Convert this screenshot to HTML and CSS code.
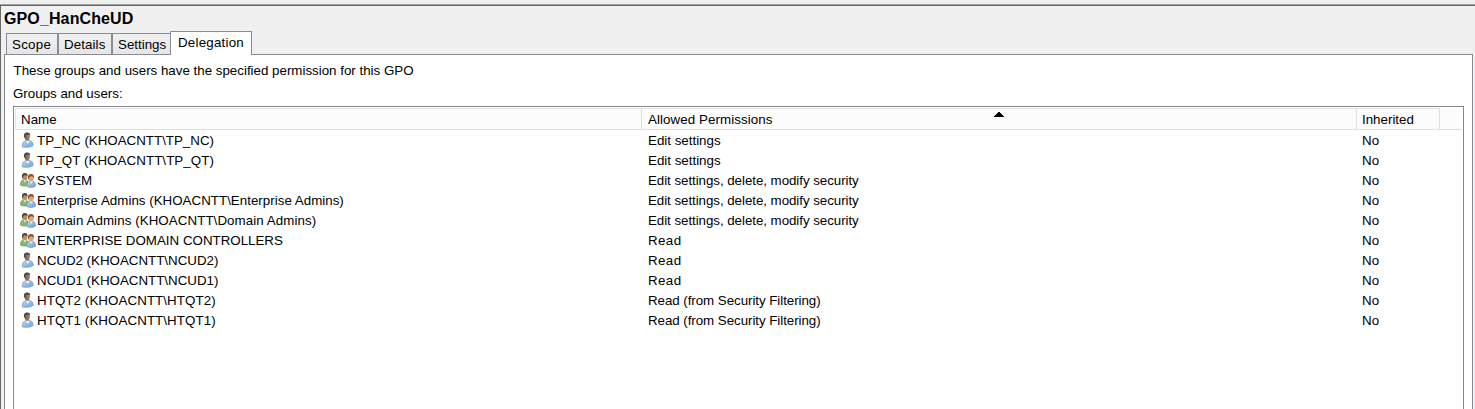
FILE: index.html
```html
<!DOCTYPE html>
<html lang="en">
<head>
<meta charset="utf-8">
<title>GPO_HanCheUD</title>
<link rel="stylesheet" href="styles.css">
</head>
<body>
<svg class="defs" width="0" height="0">
  <defs>
    <linearGradient id="blue" x1="0" y1="0" x2="1" y2="1"><stop offset="0" stop-color="#b9d6f2"/><stop offset="1" stop-color="#6fa3d6"/></linearGradient>
    <linearGradient id="skin" x1="0" y1="0" x2="1" y2="0"><stop offset="0" stop-color="#6a5446"/><stop offset="1" stop-color="#b48a6a"/></linearGradient>
    <symbol id="user" viewBox="0 0 16 16">
      <path d="M2.3 15C1.9 12.5 2.6 9.8 5.2 8.8L9.5 8.3C12.3 8.8 13.3 11 13.2 13.6C11.5 15.3 5.5 15.8 2.3 15Z" fill="url(#blue)" stroke="#6c95c0" stroke-width=".6"/>
      <path d="M5.2 8.8L8.2 12L9.4 8.3Z" fill="#eef5fb"/>
      <path d="M4.2 4C4 1.8 5.3.7 7 .7C9.2.7 10.2 2 10 4.4C9.8 7 8.7 8.9 7.4 8.9C5.7 8.9 4.4 6.6 4.2 4Z" fill="url(#skin)"/>
      <path d="M4 5C3.5 2 4.6.4 7 .4C9.2.4 10.4 1.6 10.1 3C8.6 2.2 6.6 2.4 5.6 3L5.2 5.8Z" fill="#4b4b48"/>
    </symbol>
    <symbol id="group" viewBox="0 0 16 16">
      <path d="M.6 13.2C.4 10 1.2 8.3 3.2 7.9L6.2 7.9C8 8.8 8.3 11 8 13.6C5.5 14.2 2.6 14.2.6 13.2Z" fill="#86b971" stroke="#558348" stroke-width=".6"/>
      <path d="M3.3 8L5 10.5L6.2 8Z" fill="#eff5dc"/>
      <ellipse cx="4.8" cy="4.8" rx="2.6" ry="3.5" fill="#b98f68"/>
      <path d="M2 5.3C1.7 2.3 3 1 5 1.1C7 1.1 7.9 2.4 7.5 4.2C5.8 2.9 4.2 3.1 3.4 4L3 6.5Z" fill="#57452f"/>
      <path d="M7 14.5C6.5 11.5 7.6 9.6 9.5 9.2L12.6 9.2C15 9.8 15.6 11.8 15.4 14.2C13 15.7 9 15.8 7 14.5Z" fill="url(#blue)" stroke="#5f88b5" stroke-width=".6"/>
      <path d="M9.6 9.2L11 12L12.8 9.2Z" fill="#eef5fb"/>
      <ellipse cx="11" cy="6" rx="2.7" ry="3.5" fill="#d8a680"/>
      <path d="M8 6.8C7.5 3.6 8.9 2.1 11.1 2.1C13.5 2.1 14.4 3.7 13.8 6.5C13.3 4.8 12.5 4.2 11.6 4.2C10 4.1 9.1 4.7 8.9 7.3Z" fill="#8b5134"/>
    </symbol>
  </defs>
</svg>
<main class="pane">
  <h1 class="title">GPO_HanCheUD</h1>
  <nav class="tabs">
    <span class="tab scope">Scope</span><span class="tab details">Details</span><span class="tab settings">Settings</span><span class="tab active">Delegation</span>
  </nav>
  <section class="page">
    <p class="desc">These groups and users have the specified permission for this GPO</p>
    <p class="label">Groups and users:</p>
    <div class="list">
      <div class="head"><span class="hc">Name</span><span class="hc wide">Allowed Permissions<svg class="sort" width="10" height="5" viewBox="0 0 10 5" shape-rendering="crispEdges"><path d="M4 0h2v1h1v1h1v1h1v1h1v1H0V4h1V3h1V2h1V1h1z"/></svg></span><span class="hc">Inherited</span><span class="rest"></span></div>
      <div class="row"><svg class="icon"><use href="#user"/></svg><span>TP_NC (KHOACNTT\TP_NC)</span><span>Edit settings</span><span>No</span></div>
      <div class="row"><svg class="icon"><use href="#user"/></svg><span class="wide">TP_QT (KHOACNTT\TP_QT)</span><span>Edit settings</span><span>No</span></div>
      <div class="row"><svg class="icon group"><use href="#group"/></svg><span class="wide">SYSTEM</span><span class="tight">Edit settings, delete, modify security</span><span>No</span></div>
      <div class="row"><svg class="icon group"><use href="#group"/></svg><span class="slight">Enterprise Admins (KHOACNTT\Enterprise Admins)</span><span class="tight">Edit settings, delete, modify security</span><span>No</span></div>
      <div class="row"><svg class="icon group"><use href="#group"/></svg><span class="wide">Domain Admins (KHOACNTT\Domain Admins)</span><span class="tight">Edit settings, delete, modify security</span><span>No</span></div>
      <div class="row"><svg class="icon group"><use href="#group"/></svg><span>ENTERPRISE DOMAIN CONTROLLERS</span><span class="read">Read</span><span>No</span></div>
      <div class="row"><svg class="icon"><use href="#user"/></svg><span>NCUD2 (KHOACNTT\NCUD2)</span><span class="read">Read</span><span>No</span></div>
      <div class="row"><svg class="icon"><use href="#user"/></svg><span>NCUD1 (KHOACNTT\NCUD1)</span><span class="read">Read</span><span>No</span></div>
      <div class="row"><svg class="icon"><use href="#user"/></svg><span class="wide">HTQT2 (KHOACNTT\HTQT2)</span><span class="tight">Read (from Security Filtering)</span><span>No</span></div>
      <div class="row"><svg class="icon"><use href="#user"/></svg><span class="wide">HTQT1 (KHOACNTT\HTQT1)</span><span class="tight">Read (from Security Filtering)</span><span>No</span></div>
    </div>
  </section>
</main>
</body>
</html>
```
FILE: styles.css
```css
* { box-sizing: border-box; margin: 0; padding: 0; }
html, body { height: 100%; overflow: hidden; }
body { display: flex; flex-direction: column; background: #f0f0f0; color: #000; font: 13.33px/20px "Liberation Sans", Arial, sans-serif; padding-top: 4px; white-space: nowrap; }
.defs { position: absolute; }
.pane { flex: 1; display: flex; flex-direction: column; border-top: 1px solid #a0a0a0; position: relative; box-shadow: inset 1px 1px 0 #696969; padding: 1px 2px 0 4px; min-height: 0; }
.title { font-size: 16px; line-height: 25px; height: 24px; letter-spacing: .12px; }
.tabs { display: flex; align-items: flex-end; height: 24px; padding-left: 2px; position: relative; z-index: 1; }
.tab { height: 21px; border: 1px solid #898c95; border-bottom: 0; background: linear-gradient(#f0f0f0, #e6e6e6); line-height: 21px; padding-left: 5px; }
.scope { width: 52px; letter-spacing: .25px; }
.details { width: 54px; letter-spacing: .1px; }
.settings { width: 58px; border-right: 0; }
.active { width: 82px; height: 24px; background: #fff; margin-bottom: -1px; line-height: 21px; padding-left: 7px; letter-spacing: .22px; }
.page { flex: 1; min-height: 0; border: 1px solid #898c95; border-bottom: 0; background: #fff; padding: 6px 8px 0; display: flex; flex-direction: column; }
.desc { height: 22px; padding-left: .5px; }
.label { height: 23px; line-height: 22px; }
.list { flex: 1; min-height: 0; border: 1px solid #828790; border-bottom: 0; padding: 1px 1px 0; }
.head { display: grid; grid-template-columns: 626px 715px 83px 1fr; height: 22px; background: #fcfcfc; border-bottom: 1px solid #dfdfdf; border-left: 1px solid #e5e5e5; margin-bottom: 1px; }
.hc { position: relative; border-top: 1px solid #e5e5e5; border-right: 1px solid #dfdfdf; padding-left: 5px; line-height: 22px; height: 21px; }
.hc + .hc { padding-left: 6px; }
.hc:nth-child(3) { padding-left: 5px; }
.sort { position: absolute; left: 352px; top: 3px; }
.row { display: grid; grid-template-columns: 22px 611px 714px 1fr; height: 20px; }
.icon { width: 16px; height: 16px; margin: 1px 0 0 5px; }
.icon.group { margin-left: 5px; }
.wide { letter-spacing: .08px; }
.slight { letter-spacing: .02px; }
.tight { letter-spacing: -.05px; }
.read { letter-spacing: .4px; }
```
